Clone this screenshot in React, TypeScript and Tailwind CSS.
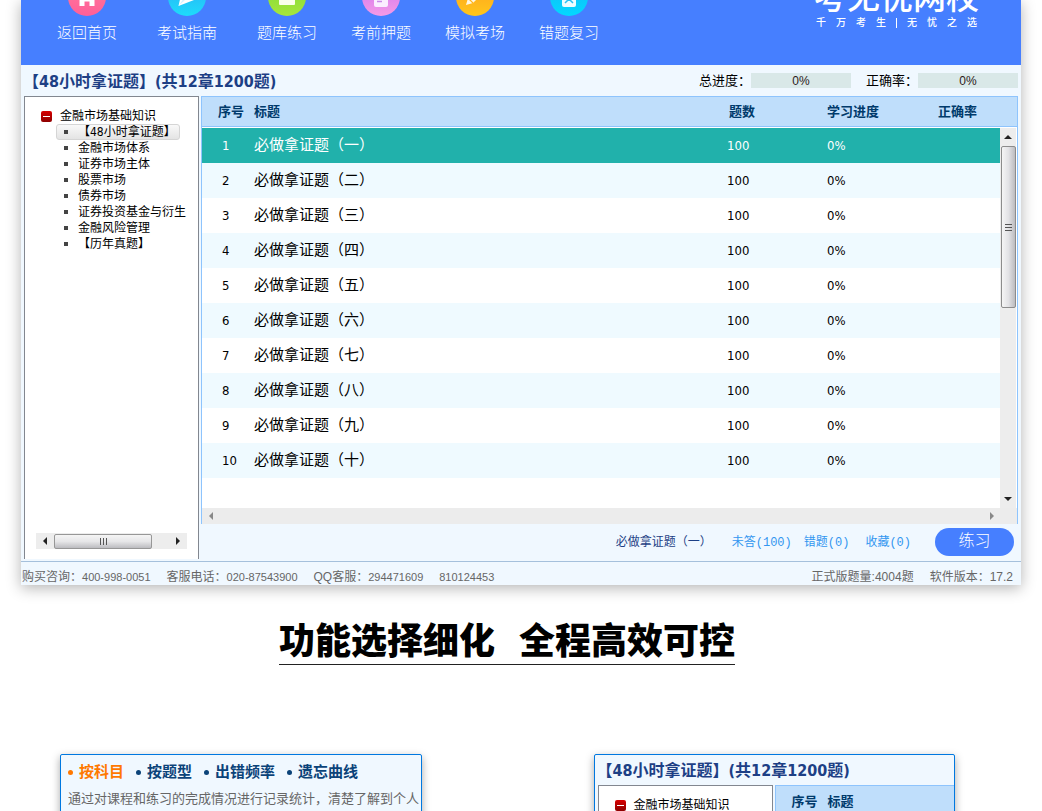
import { useState } from "react";
import type { ReactNode } from "react";

const FONT = "font-['DejaVu_Sans_Condensed','Noto_Sans_CJK_SC',sans-serif]";
const FONT_ARIAL = "font-['Liberation_Sans','Noto_Sans_CJK_SC',sans-serif]";
const FONT_MONO = "font-['Liberation_Mono','Noto_Sans_CJK_SC',monospace]";

const chapters = [
  "【48小时拿证题】",
  "金融市场体系",
  "证券市场主体",
  "股票市场",
  "债券市场",
  "证券投资基金与衍生",
  "金融风险管理",
  "【历年真题】",
];

const rows = ["一", "二", "三", "四", "五", "六", "七", "八", "九", "十"].map((n, i) => ({
  id: i + 1,
  title: `必做拿证题（${n}）`,
  count: 100,
  progress: "0%",
}));

export default function App() {
  return (
    <div className={`h-screen overflow-hidden bg-white text-black ${FONT}`}>
      {/* --- MAIN WINDOW --- */}
      <div className="mx-auto max-w-[1000px] bg-[#f0f8ff] shadow-[0_3px_14px_rgba(0,0,0,0.3)]">
        <TopBar />

        <div className="flex h-[31px] items-center justify-between pr-[3px]">
          <Title />
          <div className={`flex gap-[15px] text-[13px] leading-4 ${FONT_ARIAL}`}>
            <Progress label="总进度：" />
            <Progress label="正确率：" />
          </div>
        </div>

        <div className="flex gap-[2px] pr-[3px] pl-[3px]">
          <div className="flex pb-[2px]">
            <Tree items={chapters} />
          </div>
          <QuestionList />
        </div>

        <footer
          className={`flex h-6 items-center justify-between border-t border-[#a5c0dc] pt-[6px] pr-2 pl-[1px] text-xs leading-4 text-[#666] ${FONT_ARIAL}`}
        >
          <div className="flex">
            <Contact label="购买咨询：" value="400-998-0051" />
            <Contact label="客服电话：" value="020-87543900" />
            <Contact label="QQ客服：" value="294471609" />
            <Contact label="" value="810124453" />
          </div>
          <div className="flex gap-4">
            <span>正式版题量:4004题</span>
            <span>软件版本：17.2</span>
          </div>
        </footer>
      </div>

      {/* --- HEADING --- */}
      <h2 className="mx-auto mt-[34px] flex w-fit -translate-x-3.5 gap-6 border-b border-[#222] text-4xl leading-[45px] font-black">
        <span>功能选择细化</span>
        <span>全程高效可控</span>
      </h2>

      {/* --- FEATURE CARDS --- */}
      <div className="mt-[89px] flex gap-[172px] pr-[87px] pl-[60px]">
        <Card>
          <ModeTabs />
          <p className="pl-[7px] text-[13px] leading-5 whitespace-nowrap text-[#666]">
            通过对课程和练习的完成情况进行记录统计，清楚了解到个人
          </p>
        </Card>
        <Card>
          <div className="flex h-[30px] items-center">
            <Title />
          </div>
          <div className="flex gap-[2px] pl-[3px]">
            <Tree items={[]} />
            <div className="h-[31px] min-w-0 flex-1 overflow-hidden border border-r-0 border-[#8ec4fd] bg-[#bfdefb] text-[13px] leading-[31px] font-bold text-[#003a6b]">
              <span className="pr-[10px] pl-4">序号</span>
              <span>标题</span>
            </div>
          </div>
        </Card>
      </div>
    </div>
  );
}

function TopBar() {
  return (
    <header className="flex h-[65px] items-start justify-between overflow-hidden bg-[#467fff] pr-[42px] pl-9 text-white">
      <nav className="-mt-[22px] flex gap-[34px]">
        <div className="flex gap-10">
          <NavItem label="返回首页" id="home" from="#ff7d9c" to="#ff5f98">
            <path d="M19 10 7 20h4.500v8h5v-4.500h5V28h5v-8H31z" fill="#fff" />
          </NavItem>
          <NavItem label="考试指南" id="guide" from="#2ea8f5" to="#1ddcfb">
            <path d="M30 10 13 17l-2.500 11L26 22z" fill="#fff" />
            <path d="M30 10 16 20l-5.500 8z" fill="#d3f2ff" />
          </NavItem>
          <NavItem label="题库练习" id="bank" from="#7cd838" to="#a6e63c">
            <rect x="11" y="11" width="16" height="16" rx="1" fill="#fbffec" />
            <path d="M15 11v6l4-2 4 2v-6z" fill="#9be03b" />
          </NavItem>
        </div>
        <div className="flex gap-[34px]">
          <NavItem label="考前押题" id="guess" from="#c971f2" to="#f59ae6">
            <rect x="12" y="9" width="14" height="20" rx="2" fill="#fbeeff" />
            <path d="M16 14h7M16 18h7M15 23.500h5" stroke="#c98ae8" strokeWidth="1.500" />
          </NavItem>
          <NavItem label="模拟考场" id="mock" from="#ff9d1c" to="#ffc61c">
            <path d="m10 27 2-7L23 9l5 5-11 11z" fill="#fff7e2" />
            <path d="m12 20 5 5" stroke="#ffb51c" strokeWidth="1.200" />
          </NavItem>
          <NavItem label="错题复习" id="wrong" from="#16b4f6" to="#02d9ff">
            <rect x="12" y="9" width="14" height="20" rx="2" fill="#effcff" />
            <path d="m15 17 8 8M23 17l-8 8" stroke="#2cc0f2" strokeWidth="1.500" />
          </NavItem>
        </div>
      </nav>

      <div className="-mt-[19px] flex flex-col items-center">
        <div className="text-[33px] leading-[34px] font-medium">考无忧网校</div>
        <div className="flex items-center gap-[10px] text-[10px] leading-4 font-medium">
          <span>千</span>
          <span>万</span>
          <span>考</span>
          <span>生</span>
          <span className="h-2.5 w-px bg-white" />
          <span>无</span>
          <span>忧</span>
          <span>之</span>
          <span>选</span>
        </div>
      </div>
    </header>
  );
}

type NavItemProps = {
  label: string;
  id: string;
  from: string;
  to: string;
  children: ReactNode;
};

function NavItem({ label, id, from, to, children }: NavItemProps) {
  return (
    <a href="#" className="flex flex-col items-center gap-[7px] text-[15px] leading-5 font-light">
      <svg width="38" height="38" viewBox="0 0 38 38" aria-hidden="true">
        <defs>
          <linearGradient id={id} x1="0" y1="0" x2="0" y2="1">
            <stop offset="0" stopColor={from} />
            <stop offset="1" stopColor={to} />
          </linearGradient>
        </defs>
        <circle cx="19" cy="19" r="19" fill={`url(#${id})`} />
        {children}
      </svg>
      {label}
    </a>
  );
}

function Title() {
  return (
    <h1 className="pt-[2px] pl-[2px] text-base leading-5 font-bold whitespace-nowrap text-[#1d3f85]">
      【48小时拿证题】(共12章1200题)
    </h1>
  );
}

function Progress({ label }: { label: string }) {
  return (
    <div className="flex items-center">
      <span>{label}</span>
      <span className="h-[15px] w-[100px] bg-[#d9e8e8] text-center text-xs leading-4 text-[#2b1a1a]">0%</span>
    </div>
  );
}

function Contact({ label, value }: { label: string; value: string }) {
  return (
    <span className="pr-3">
      {label}
      <span className="pr-1 text-[11px]">{value}</span>
    </span>
  );
}

// Chapter tree on the left
function Tree({ items }: { items: string[] }) {
  const [selected, setSelected] = useState(0);

  return (
    <aside className="flex w-[175px] shrink-0 flex-col border border-b-0 border-[#828790] bg-white pt-[11px] text-xs leading-4">
      <button className="flex h-4 items-center gap-2 pl-4 leading-[18px] whitespace-nowrap">
        <span className="flex size-[11px] items-center justify-center rounded-[2px] bg-gradient-to-b from-[#d80000] to-[#8e0000]">
          <span className="h-px w-[7px] bg-white" />
        </span>
        金融市场基础知识
      </button>
      <ul>
        {items.map((name, i) => (
          <li key={name} className="flex h-4 pl-[31px]">
            <button
              onClick={() => setSelected(i)}
              className={`flex h-4 items-center gap-[10px] rounded-[3px] border pr-[3px] pl-[7px] leading-4 whitespace-nowrap ${
                i === selected ? "border-[#d5d5d5] bg-gradient-to-b from-[#f9f9f9] to-[#e4e4e4]" : "border-transparent"
              }`}
            >
              <span className="size-1 bg-[#444]" />
              {name}
            </button>
          </li>
        ))}
      </ul>
      <div className="mx-[11px] mt-auto mb-[10px] flex h-4 items-center bg-[#ededed]">
        <ArrowButton dir="left" />
        <div className="flex h-[15px] w-[98px] items-center justify-center gap-[2px] rounded-[2px] border border-[#979797] bg-gradient-to-b from-[#f5f5f5] via-[#e6e6e8] to-[#bcbcc0]">
          <span className="h-[7px] w-px bg-[#555]" />
          <span className="h-[7px] w-px bg-[#555]" />
          <span className="h-[7px] w-px bg-[#555]" />
        </div>
        <span className="flex-1" />
        <ArrowButton dir="right" />
      </div>
    </aside>
  );
}

const arrows = {
  left: "M6 0v8L2 4z",
  right: "M2 0v8l4-4z",
  up: "M0 6h8L4 2z",
  down: "M0 2h8L4 6z",
};

function ArrowButton({ dir, muted = false }: { dir: keyof typeof arrows; muted?: boolean }) {
  return (
    <button aria-label={dir} className="flex h-[18px] w-[18px] shrink-0 items-center justify-center">
      <svg width="8" height="8" viewBox="0 0 8 8" fill={muted ? "#888" : "#222"}>
        <path d={arrows[dir]} />
      </svg>
    </button>
  );
}

function Columns() {
  return (
    <colgroup>
      <col className="w-[52px]" />
      <col />
      <col className="w-[100px]" />
      <col className="w-[111px]" />
      <col className="w-[62px]" />
    </colgroup>
  );
}

function QuestionList() {
  const [active, setActive] = useState(1);
  const current = rows.find((r) => r.id === active);

  return (
    <section className="min-w-0 flex-1">
      <div className="border border-[#8ec4fd] bg-[#bfdefb] pr-[17px]">
        <table className="w-full table-fixed text-left text-[13px] leading-[29px] text-[#003a6b]">
          <Columns />
          <thead>
            <tr>
              <th className="pt-px pb-0 pl-4 leading-7">序号</th>
              <th className="pt-px leading-7">标题</th>
              <th className="pt-px pl-[2px] leading-7">题数</th>
              <th className="pt-px leading-7">学习进度</th>
              <th className="pt-px leading-7">正确率</th>
            </tr>
          </thead>
        </table>
      </div>

      <div className="border-x border-[#8ec4fd] bg-white pt-px">
        <div className="flex">
          <div className="flex-1 pb-[30px]">
            <table className="w-full table-fixed text-left text-[13px] leading-5">
              <Columns />
              <tbody>
                {rows.map((r) => (
                  <tr
                    key={r.id}
                    onClick={() => setActive(r.id)}
                    className={`h-[35px] ${
                      r.id === active ? "bg-[#21b1ab] text-white" : r.id % 2 === 0 ? "bg-[#effaff]" : "bg-white"
                    }`}
                  >
                    <td className="pl-5">{r.id}</td>
                    <td className="pb-[2px] text-[15px]">{r.title}</td>
                    <td>{r.count}</td>
                    <td>{r.progress}</td>
                    <td />
                  </tr>
                ))}
              </tbody>
            </table>
          </div>
          <div className="flex w-[17px] flex-col items-center border-r border-white bg-[#ededed]">
            <ArrowButton dir="up" />
            <div className="flex h-[162px] w-[15px] flex-col items-center justify-center gap-[2px] rounded-[2px] border border-[#8c8c8c] bg-gradient-to-r from-[#f5f5f5] via-[#e2e2e5] to-[#bcbcc0]">
              <span className="h-px w-[7px] bg-[#555]" />
              <span className="h-px w-[7px] bg-[#555]" />
              <span className="h-px w-[7px] bg-[#555]" />
            </div>
            <span className="flex-1" />
            <ArrowButton dir="down" />
          </div>
        </div>
        <div className="flex h-4 items-center justify-between bg-[#ececec] pr-4">
          <ArrowButton dir="left" muted />
          <ArrowButton dir="right" muted />
        </div>
      </div>

      <div className={`flex h-[37px] items-center justify-end gap-3 pr-1 pb-[2px] text-xs leading-4 ${FONT_MONO}`}>
        <span className="pt-[2px] pr-2 text-[#1d3f85]">{current?.title}</span>
        <button className="pt-[2px] text-[#3296f0]">未答(100)</button>
        <button className="pt-[2px] text-[#3296f0]">错题(0)</button>
        <button className="pt-[2px] pl-1 text-[#3296f0]">收藏(0)</button>
        <button className="ml-3 h-7 w-[79px] rounded-full bg-[#467fff] text-base leading-7 font-light text-white">
          练习
        </button>
      </div>
    </section>
  );
}

function Card({ children }: { children: ReactNode }) {
  return (
    <div className="h-64 min-w-0 flex-1 overflow-hidden rounded-[2px] border border-[#0078e0] bg-[#f0f8ff] shadow-[0_3px_8px_rgba(0,0,0,0.35)]">
      {children}
    </div>
  );
}

function ModeTabs() {
  const [mode, setMode] = useState("按科目");

  return (
    <div className="flex h-[34px] items-center gap-3 pl-[7px] text-[15px] leading-5 font-bold">
      {["按科目", "按题型", "出错频率", "遗忘曲线"].map((name) => (
        <button
          key={name}
          onClick={() => setMode(name)}
          className={`flex items-center gap-1.5 ${name === mode ? "text-[#ff7800]" : "text-[#0b4379]"}`}
        >
          <span className="size-[5px] rounded-full bg-current" />
          {name}
        </button>
      ))}
    </div>
  );
}
